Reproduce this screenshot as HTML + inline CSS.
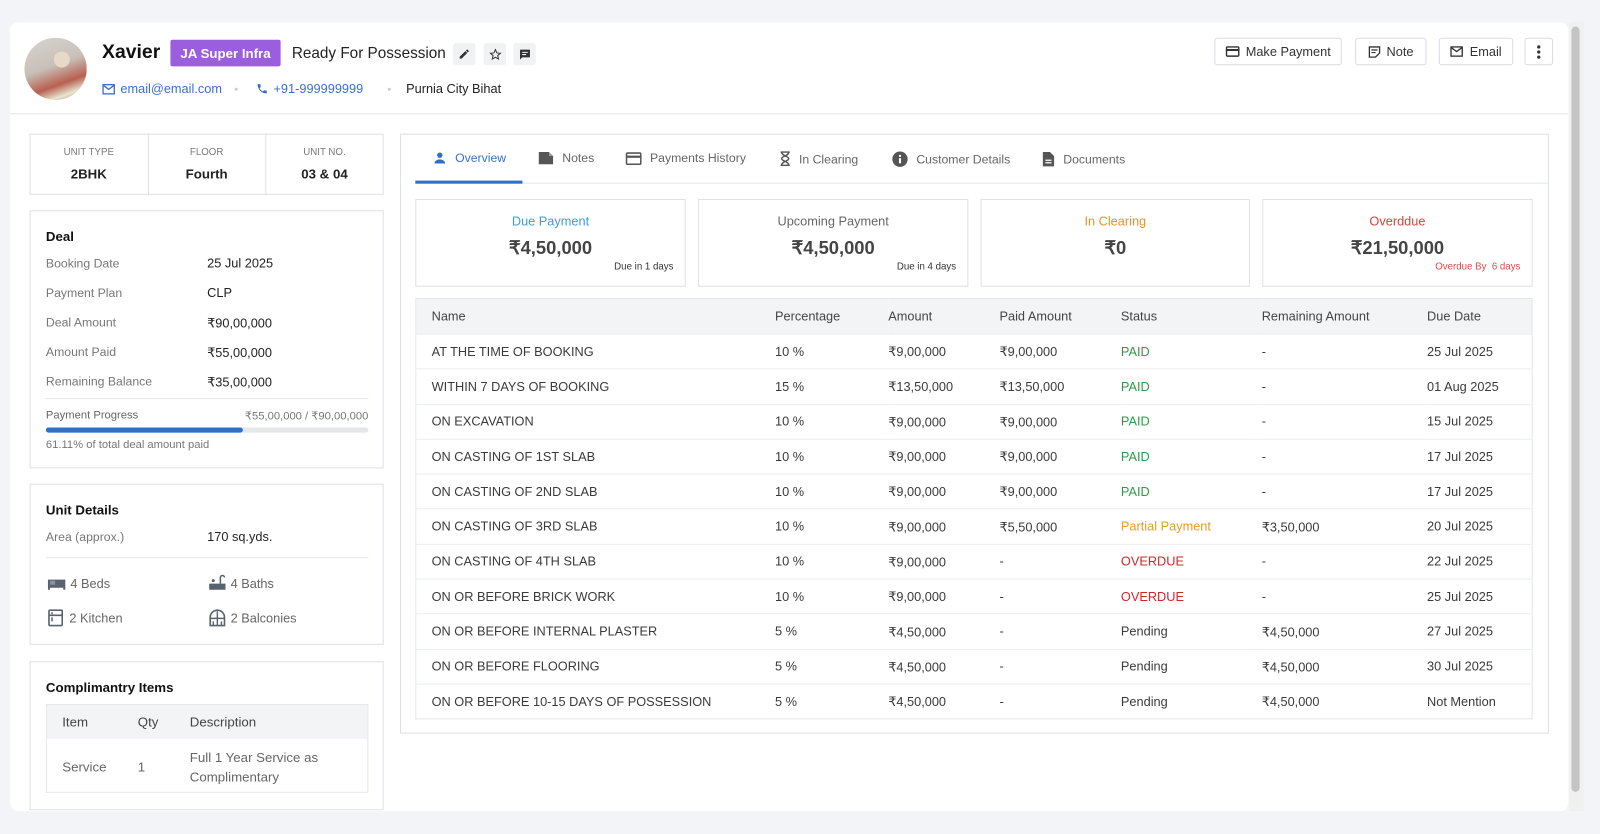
<!DOCTYPE html>
<html><head><meta charset="utf-8"><style>
*{box-sizing:border-box;margin:0;padding:0}
html,body{width:1600px;height:834px;overflow:hidden;background:#f3f4f7;font-family:"Liberation Sans",sans-serif;color:#333}
#s{position:absolute;left:0;top:0;width:1568px;height:817px;transform:scale(1.0204);transform-origin:0 0}
.a{position:absolute}
.card{position:absolute;left:10px;top:22px;width:1527px;height:773px;background:#fff;border-radius:8px}
.box{position:absolute;border:1px solid #dfe1e5;background:#fff}
.btn{position:absolute;top:37px;height:27px;border:1px solid #d9dbe0;border-radius:3px;font-size:12.5px;color:#333;display:flex;align-items:center;justify-content:center;gap:6px;background:#fff}
.ib{position:absolute;top:42px;width:22px;height:22px;background:#f1f2f4;border-radius:3px;display:flex;align-items:center;justify-content:center}
.lbl{font-size:12px;color:#777}
.val{font-size:12.5px;color:#222}
.tab{position:absolute;top:148px;font-size:12px;color:#666;display:flex;align-items:center;gap:8px}
.sum{position:absolute;top:195px;width:265px;height:86px;border:1px solid #dfe1e5;text-align:center}
.sum .t{font-size:12.5px;margin-top:14px}
.sum .v{font-size:18px;font-weight:bold;color:#444;margin-top:9px}
.sum .d{position:absolute;right:11px;bottom:13px;font-size:9.5px;color:#333}
table{position:absolute;left:407px;top:292px;width:1095px;border-collapse:collapse;font-size:12.5px;border:1px solid #e5e6e9}
th{background:#f3f4f6;font-weight:normal;color:#444;text-align:left;height:35px}
td{height:34.3px;border-top:1px solid #eceef0;color:#3a3a3a}
th:first-child,td:first-child{padding-left:15px}
.pd{color:#2e9a48}.pp{color:#e0a020}.od{color:#d02828}
</style></head><body><div id="s">
<div class="card"></div>
<div class="a" style="left:1538px;top:22px;width:14px;height:773px;background:#f0f0f0"></div>
<div class="a" style="left:1540px;top:26px;width:8px;height:750px;background:#c4c4c4;border-radius:4px"></div>

<div class="a" style="left:24px;top:37px;width:61px;height:61px;border-radius:50%;background:radial-gradient(circle at 60% 35%,#e8d8c8 0 14%,transparent 15%),linear-gradient(160deg,#d8d4d0 0%,#c8c0b8 45%,#b86050 70%,#e8e6d0 85%,#8a7868 100%)"></div>
<div class="a" style="left:100px;top:41px;font-size:19px;font-weight:bold;color:#111">Xavier</div>
<div class="a" style="left:167px;top:39px;width:108px;height:26px;background:#9b5fde;color:#fff;font-size:13px;font-weight:bold;display:flex;align-items:center;justify-content:center;border-radius:2px">JA Super Infra</div>
<div class="a" style="left:286px;top:44px;font-size:15px;color:#222">Ready For Possession</div>
<div class="ib" style="left:444px"><svg width="12" height="12" viewBox="0 0 24 24"><path d="M3 17.25V21h3.75L17.8 9.94l-3.75-3.75L3 17.25zM20.7 7.04a1 1 0 000-1.41l-2.34-2.34a1 1 0 00-1.41 0l-1.830 1.83 3.75 3.75 1.83-1.83z" fill="#333"/></svg></div>
<div class="ib" style="left:474px"><svg width="13" height="13" viewBox="0 0 24 24"><path d="M12 3l2.7 6 6.3.6-4.8 4.2 1.4 6.2L12 16.8 6.4 20l1.4-6.2L3 9.6 9.3 9z" fill="none" stroke="#333" stroke-width="1.8"/></svg></div>
<div class="ib" style="left:503px"><svg width="13" height="13" viewBox="0 0 24 24"><path d="M4 3h16a1 1 0 011 1v12a1 1 0 01-1 1H7l-4 4V4a1 1 0 011-1zm3 4v2h10V7zm0 4v2h7v-2z" fill="#333"/></svg></div>
<div class="a" style="left:100px;top:80px;font-size:12.5px;color:#3a6fd0;display:flex;align-items:center;gap:5px"><svg width="13" height="11" viewBox="0 0 13 11"><rect x="1" y="1" width="11" height="9" fill="none" stroke="#3a6fd0" stroke-width="1.3"/><path d="M1 1.5l5.5 4 5.5-4" fill="none" stroke="#3a6fd0" stroke-width="1.3"/></svg>email@email.com</div>
<div class="a" style="left:230px;top:86px;width:3px;height:3px;border-radius:50%;background:#ccc"></div>
<div class="a" style="left:251px;top:80px;font-size:12.5px;color:#3a6fd0;display:flex;align-items:center;gap:5px"><svg width="12" height="12" viewBox="0 0 24 24"><path d="M6.6 10.8a15.1 15.1 0 006.6 6.6l2.2-2.2c.3-.3.7-.4 1-.2 1.100.4 2.3.6 3.6.6.6 0 1 .4 1 1V20c0 .6-.4 1-1 1A17 17 0 013 4c0-.6.4-1 1-1h3.5c.6 0 1 .4 1 1 0 1.3.2 2.5.6 3.6.1.3 0 .7-.2 1z" fill="#3a6fd0"/></svg>+91-999999999</div>
<div class="a" style="left:380px;top:86px;width:3px;height:3px;border-radius:50%;background:#ccc"></div>
<div class="a" style="left:398px;top:80px;font-size:12.5px;color:#222">Purnia City Bihat</div>

<div class="btn" style="left:1190px;width:125px"><svg width="14" height="11" viewBox="0 0 14 11"><rect x="1" y="1" width="12" height="9" rx="1" fill="none" stroke="#333" stroke-width="1.4"/><rect x="1" y="3" width="12" height="2" fill="#333"/></svg>Make Payment</div>
<div class="btn" style="left:1328px;width:70px"><svg width="12" height="12" viewBox="0 0 12 12"><path d="M1 1h10v6l-4 4H1z" fill="none" stroke="#333" stroke-width="1.3"/><path d="M3 4h6M3 6.5h4" stroke="#333" stroke-width="1.2"/></svg>Note</div>
<div class="btn" style="left:1410px;width:73px"><svg width="13" height="11" viewBox="0 0 13 11"><rect x="1" y="1" width="11" height="9" fill="none" stroke="#333" stroke-width="1.3"/><path d="M1 1.5l5.5 4 5.5-4" fill="none" stroke="#333" stroke-width="1.3"/></svg>Email</div>
<div class="btn" style="left:1494px;width:28px"><svg width="4" height="14" viewBox="0 0 4 14"><circle cx="2" cy="2" r="1.6" fill="#333"/><circle cx="2" cy="7" r="1.6" fill="#333"/><circle cx="2" cy="12" r="1.6" fill="#333"/></svg></div>
<div class="a" style="left:10px;top:111px;width:1527px;height:1px;background:#e2e4e8"></div>

<div class="box" style="left:29px;top:131px;width:347px;height:60px"></div>
<div class="a" style="left:145px;top:131px;width:1px;height:60px;background:#dfe1e5"></div>
<div class="a" style="left:260px;top:131px;width:1px;height:60px;background:#dfe1e5"></div>
<div class="a" style="left:29px;top:144px;width:116px;text-align:center;font-size:9.5px;color:#777">UNIT TYPE</div>
<div class="a" style="left:29px;top:163px;width:116px;text-align:center;font-size:13px;font-weight:bold;color:#222">2BHK</div>
<div class="a" style="left:145px;top:144px;width:115px;text-align:center;font-size:9.5px;color:#777">FLOOR</div>
<div class="a" style="left:145px;top:163px;width:115px;text-align:center;font-size:13px;font-weight:bold;color:#222">Fourth</div>
<div class="a" style="left:260px;top:144px;width:116px;text-align:center;font-size:9.5px;color:#777">UNIT NO.</div>
<div class="a" style="left:260px;top:163px;width:116px;text-align:center;font-size:13px;font-weight:bold;color:#222">03 &amp; 04</div>

<div class="box" style="left:29px;top:206px;width:347px;height:253px"></div>
<div class="a" style="left:45px;top:224px;font-size:13px;font-weight:bold;color:#111">Deal</div>
<div class="a lbl" style="left:45px;top:251px">Booking Date</div><div class="a val" style="left:203px;top:251px">25 Jul 2025</div>
<div class="a lbl" style="left:45px;top:280px">Payment Plan</div><div class="a val" style="left:203px;top:280px">CLP</div>
<div class="a lbl" style="left:45px;top:309px">Deal Amount</div><div class="a val" style="left:203px;top:309px">₹90,00,000</div>
<div class="a lbl" style="left:45px;top:338px">Amount Paid</div><div class="a val" style="left:203px;top:338px">₹55,00,000</div>
<div class="a lbl" style="left:45px;top:367px">Remaining Balance</div><div class="a val" style="left:203px;top:367px">₹35,00,000</div>
<div class="a" style="left:45px;top:390px;width:316px;height:1px;background:#e6e7ea"></div>
<div class="a" style="left:45px;top:401px;font-size:11px;color:#666">Payment Progress</div>
<div class="a" style="left:200px;top:401px;width:161px;text-align:right;font-size:11px;color:#777">₹55,00,000 / ₹90,00,000</div>
<div class="a" style="left:45px;top:419px;width:316px;height:5px;background:#e5e6e9;border-radius:3px"><div style="width:193px;height:5px;background:#2f6fc4;border-radius:3px"></div></div>
<div class="a" style="left:45px;top:430px;font-size:11px;color:#777">61.11% of total deal amount paid</div>

<div class="box" style="left:29px;top:474px;width:347px;height:158px"></div>
<div class="a" style="left:45px;top:492px;font-size:13px;font-weight:bold;color:#111">Unit Details</div>
<div class="a lbl" style="left:45px;top:519px">Area (approx.)</div><div class="a val" style="left:203px;top:519px">170 sq.yds.</div>
<div class="a" style="left:45px;top:546px;width:316px;height:1px;background:#e6e7ea"></div>
<div class="a" style="left:46px;top:565px;font-size:12.5px;color:#666;display:flex;align-items:center;gap:4px"><svg width="19" height="14" viewBox="0 0 19 14"><path d="M1 3h17v10h-2v-2H3v2H1z" fill="#5a6270"/><rect x="3" y="4" width="5" height="4" fill="#fff" opacity=".3"/></svg>4 Beds</div>
<div class="a" style="left:204px;top:563px;font-size:12.5px;color:#666;display:flex;align-items:center;gap:4px"><svg width="18" height="17" viewBox="0 0 18 17"><path d="M1 9h16v6H1z" fill="#5a6270"/><path d="M12 9V3a2 2 0 014 0" fill="none" stroke="#5a6270" stroke-width="1.5"/><circle cx="5" cy="6" r="1.5" fill="#5a6270"/></svg>4 Baths</div>
<div class="a" style="left:47px;top:597px;font-size:12.5px;color:#666;display:flex;align-items:center;gap:6px"><svg width="15" height="17" viewBox="0 0 15 17"><rect x="1" y="1" width="13" height="15" rx="1" fill="none" stroke="#5a6270" stroke-width="1.6"/><path d="M1 6h13M4 3v2M4 8v4" stroke="#5a6270" stroke-width="1.5"/></svg>2 Kitchen</div>
<div class="a" style="left:204px;top:597px;font-size:12.5px;color:#666;display:flex;align-items:center;gap:4px"><svg width="18" height="17" viewBox="0 0 18 17"><path d="M2 16V8a7 7 0 0114 0v8z" fill="none" stroke="#5a6270" stroke-width="1.6"/><path d="M9 2v14M2 9h14M5 12v4M13 12v4" stroke="#5a6270" stroke-width="1.4"/></svg>2 Balconies</div>

<div class="box" style="left:29px;top:648px;width:347px;height:146px"></div>
<div class="a" style="left:45px;top:666px;font-size:13px;font-weight:bold;color:#111">Complimantry Items</div>
<div class="a" style="left:45px;top:690px;width:316px;height:87px;border:1px solid #e5e6e9"></div>
<div class="a" style="left:46px;top:691px;width:314px;height:33px;background:#f3f4f6"></div>
<div class="a" style="left:61px;top:700px;font-size:13px;color:#444">Item</div>
<div class="a" style="left:135px;top:700px;font-size:13px;color:#444">Qty</div>
<div class="a" style="left:186px;top:700px;font-size:13px;color:#444">Description</div>
<div class="a" style="left:61px;top:744px;font-size:13px;color:#666">Service</div>
<div class="a" style="left:135px;top:744px;font-size:13px;color:#666">1</div>
<div class="a" style="left:186px;top:733px;font-size:13px;color:#666;line-height:19px">Full 1 Year Service as<br>Complimentary</div>

<div class="box" style="left:392px;top:131px;width:1126px;height:588px"></div>
<div class="a" style="left:407px;top:179px;width:1110px;height:1px;background:#e2e4e8"></div>
<div class="a" style="left:407px;top:177px;width:105px;height:3px;background:#2f6fc4"></div>
<div class="tab" style="left:424px;color:#3a70c8"><svg width="14" height="14" viewBox="0 0 24 24"><circle cx="12" cy="7" r="4.5" fill="#2f6fc4"/><path d="M3 21c0-4 4-7 9-7s9 3 9 7z" fill="#2f6fc4"/></svg>Overview</div>
<div class="tab" style="left:527px"><svg width="16" height="14" viewBox="0 0 16 14"><path d="M1 1h10l4 4v8H1z" fill="#555"/><path d="M11 1v4h4" fill="#999"/></svg>Notes</div>
<div class="tab" style="left:613px"><svg width="16" height="13" viewBox="0 0 16 13"><rect x="1" y="1" width="14" height="11" rx="1" fill="none" stroke="#555" stroke-width="1.5"/><rect x="1" y="3.5" width="14" height="2.2" fill="#555"/></svg>Payments History</div>
<div class="tab" style="left:764px"><svg width="11" height="15" viewBox="0 0 11 15"><path d="M1 1h9M1 14h9M2 1c0 4 7 4 7 6.5S2 10 2 14M9 1c0 4-7 4-7 6.5S9 10 9 14" fill="none" stroke="#555" stroke-width="1.4"/></svg>In Clearing</div>
<div class="tab" style="left:874px"><svg width="16" height="16" viewBox="0 0 16 16"><circle cx="8" cy="8" r="7.5" fill="#555"/><rect x="7" y="7" width="2" height="5" fill="#fff"/><circle cx="8" cy="4.8" r="1.1" fill="#fff"/></svg>Customer Details</div>
<div class="tab" style="left:1021px"><svg width="13" height="16" viewBox="0 0 13 16"><path d="M1 1h7l4 4v10H1z" fill="#555"/><path d="M3.5 9h6M3.5 11.5h6" stroke="#fff" stroke-width="1.2"/></svg>Documents</div>

<div class="sum" style="left:407px"><div class="t" style="color:#3aa0d8">Due Payment</div><div class="v">₹4,50,000</div><div class="d">Due in 1 days</div></div>
<div class="sum" style="left:684px"><div class="t" style="color:#666">Upcoming Payment</div><div class="v">₹4,50,000</div><div class="d">Due in 4 days</div></div>
<div class="sum" style="left:961px;width:264px"><div class="t" style="color:#e8922a">In Clearing</div><div class="v">₹0</div></div>
<div class="sum" style="left:1237px"><div class="t" style="color:#d84040">Overddue</div><div class="v">₹21,50,000</div><div class="d" style="color:#e04848">Overdue By &nbsp;6 days</div></div>

<table>
<tr><th style="width:352px">Name</th><th style="width:111px">Percentage</th><th style="width:109px">Amount</th><th style="width:119px">Paid Amount</th><th style="width:138px">Status</th><th style="width:162px">Remaining Amount</th><th>Due Date</th></tr>
<tr><td>AT THE TIME OF BOOKING</td><td>10 %</td><td>₹9,00,000</td><td>₹9,00,000</td><td class="pd">PAID</td><td>-</td><td>25 Jul 2025</td></tr>
<tr><td>WITHIN 7 DAYS OF BOOKING</td><td>15 %</td><td>₹13,50,000</td><td>₹13,50,000</td><td class="pd">PAID</td><td>-</td><td>01 Aug 2025</td></tr>
<tr><td>ON EXCAVATION</td><td>10 %</td><td>₹9,00,000</td><td>₹9,00,000</td><td class="pd">PAID</td><td>-</td><td>15 Jul 2025</td></tr>
<tr><td>ON CASTING OF 1ST SLAB</td><td>10 %</td><td>₹9,00,000</td><td>₹9,00,000</td><td class="pd">PAID</td><td>-</td><td>17 Jul 2025</td></tr>
<tr><td>ON CASTING OF 2ND SLAB</td><td>10 %</td><td>₹9,00,000</td><td>₹9,00,000</td><td class="pd">PAID</td><td>-</td><td>17 Jul 2025</td></tr>
<tr><td>ON CASTING OF 3RD SLAB</td><td>10 %</td><td>₹9,00,000</td><td>₹5,50,000</td><td class="pp">Partial Payment</td><td>₹3,50,000</td><td>20 Jul 2025</td></tr>
<tr><td>ON CASTING OF 4TH SLAB</td><td>10 %</td><td>₹9,00,000</td><td>-</td><td class="od">OVERDUE</td><td>-</td><td>22 Jul 2025</td></tr>
<tr><td>ON OR BEFORE BRICK WORK</td><td>10 %</td><td>₹9,00,000</td><td>-</td><td class="od">OVERDUE</td><td>-</td><td>25 Jul 2025</td></tr>
<tr><td>ON OR BEFORE INTERNAL PLASTER</td><td>5 %</td><td>₹4,50,000</td><td>-</td><td>Pending</td><td>₹4,50,000</td><td>27 Jul 2025</td></tr>
<tr><td>ON OR BEFORE FLOORING</td><td>5 %</td><td>₹4,50,000</td><td>-</td><td>Pending</td><td>₹4,50,000</td><td>30 Jul 2025</td></tr>
<tr><td>ON OR BEFORE 10-15 DAYS OF POSSESSION</td><td>5 %</td><td>₹4,50,000</td><td>-</td><td>Pending</td><td>₹4,50,000</td><td>Not Mention</td></tr>
</table>
</div></body></html>
